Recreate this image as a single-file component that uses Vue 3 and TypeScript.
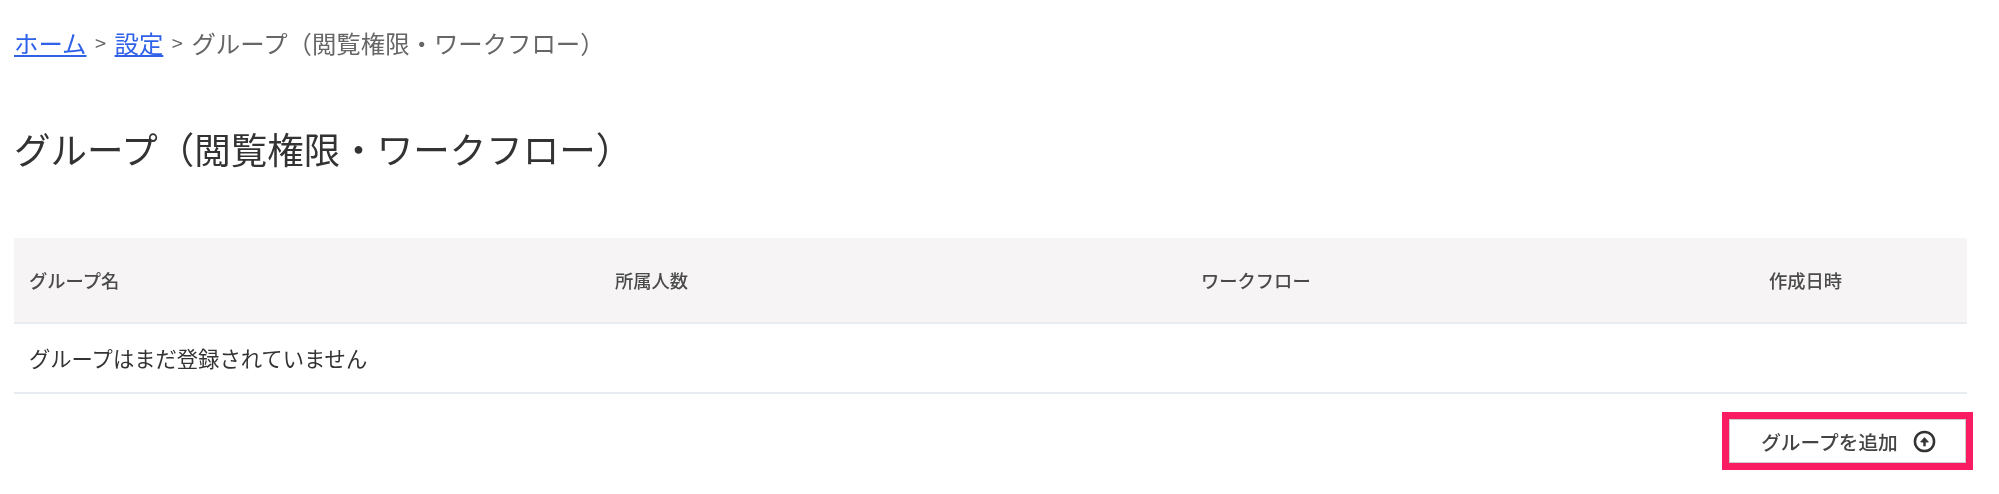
<script setup lang="ts">
const columns: string[] = ['グループ名', '所属人数', 'ワークフロー', '作成日時']
</script>

<template>
  <main class="page">
    <nav class="crumbs">
      <a href="#">ホーム</a>
      <span class="sep">&gt;</span>
      <a href="#">設定</a>
      <span class="sep">&gt;</span>
      <span>グループ（閲覧権限・ワークフロー）</span>
    </nav>
    <h1 class="title">グループ（閲覧権限・ワークフロー）</h1>
    <div class="table">
      <div class="head">
        <div v-for="c in columns" :key="c" class="th">{{ c }}</div>
      </div>
      <div class="row">グループはまだ登録されていません</div>
    </div>
    <div class="actions">
      <button class="add" type="button">
        <span>グループを追加</span>
        <svg class="icon" viewBox="0 0 24 24" width="23" height="23" fill="none" stroke="#333" aria-hidden="true">
          <circle cx="12" cy="12" r="10" stroke-width="2.6" />
          <path d="M12 17V10" stroke-width="2.6" />
          <path d="M8 12.5 12 8l4 4.5z" fill="#333" stroke-width="1" />
        </svg>
      </button>
    </div>
  </main>
</template>

<style scoped>
.page {
  width: 1999px;
  height: 494px;
  box-sizing: border-box;
  padding: 27px 32px 0 14px;
  font-family: "Noto Sans CJK JP", "Liberation Sans", sans-serif;
  color: #333;
  background: #fff;
  overflow: hidden;
  filter: blur(0.6px);
}
.crumbs {
  display: flex;
  align-items: center;
  height: 32px;
  font-size: 24.4px;
  line-height: 32px;
  color: #666;
  white-space: nowrap;
}
.crumbs a {
  color: #2f62e8;
  text-decoration: underline;
}
.sep {
  margin: 0 8.5px;
  font-size: 20px;
}
.title {
  margin: 65px 0 0;
  height: 50px;
  font-size: 36.5px;
  line-height: 50px;
  font-weight: 400;
  color: #333;
  white-space: nowrap;
}
.table {
  margin-top: 64px;
}
.head {
  display: grid;
  grid-template-columns: 586px 586px 568px 1fr;
  align-items: center;
  height: 84px;
  padding-left: 15px;
  background: #f6f4f5;
  border-bottom: 2px solid #e8ecf1;
}
.th {
  font-size: 18.3px;
  color: #4a4a4a;
  font-weight: 500;
}
.row {
  display: flex;
  align-items: center;
  height: 66px;
  padding: 0 0 2px 15px;
  font-size: 21.3px;
  color: #333;
  border-bottom: 2px solid #e8ecf1;
}
.actions {
  display: flex;
  justify-content: flex-end;
  margin-top: 18px;
  margin-right: -6px;
}
.add {
  display: flex;
  align-items: center;
  justify-content: center;
  gap: 15px;
  width: 251px;
  height: 58px;
  box-sizing: border-box;
  padding: 0 0 0 2px;
  border: 7px solid #f91c63;
  outline: 1px solid #ccc;
  outline-offset: -8px;
  background: #fff;
  font-family: inherit;
  font-size: 19.7px;
  font-weight: 500;
  color: #444;
}
.icon {
  flex: none;
}
</style>
